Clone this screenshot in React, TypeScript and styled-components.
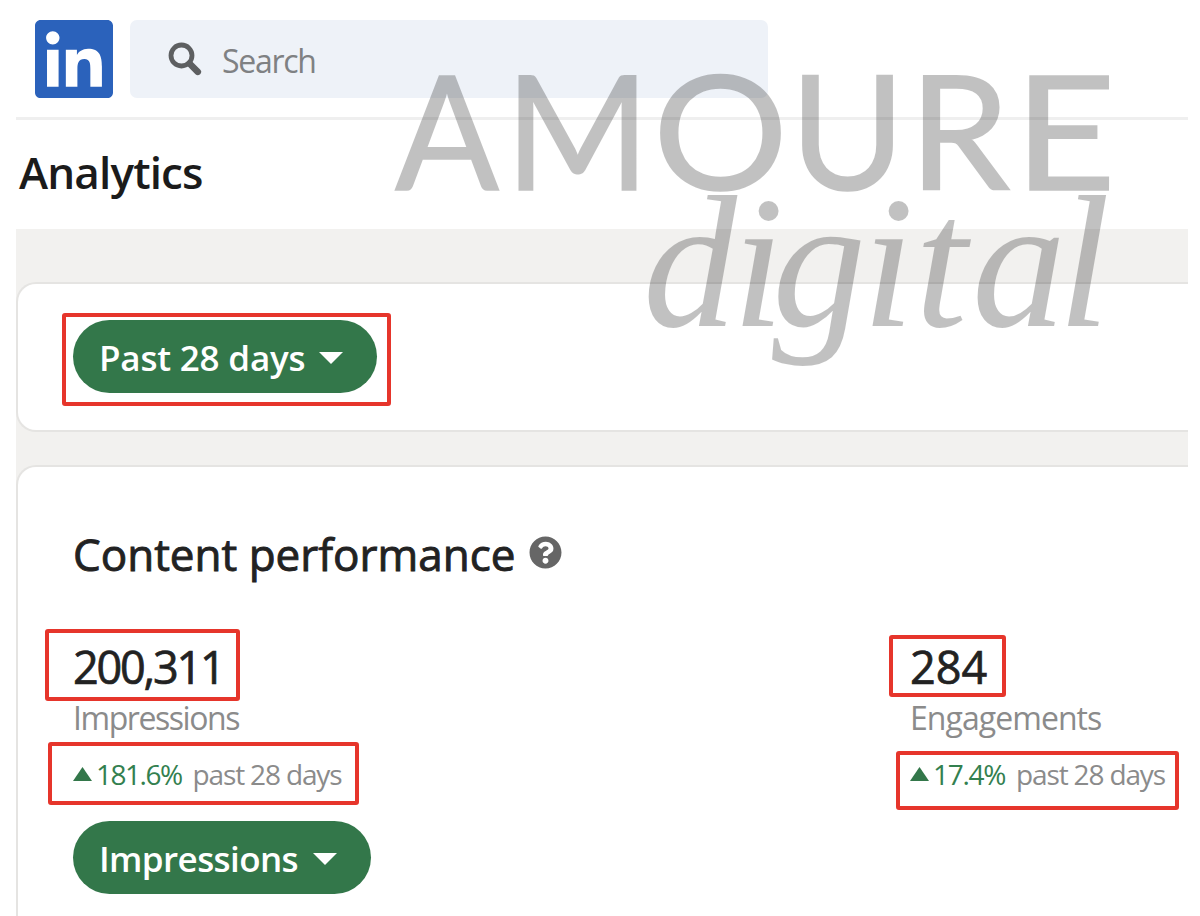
import React from "react";
import styled, { createGlobalStyle } from "styled-components";
import { FaLinkedin, FaQuestionCircle } from "react-icons/fa";

const STATS = [
  {
    value: "200,311",
    label: "Impressions",
    change: "181.6%",
    spacing: { value: -2.2, label: -1.45, change: -1.5 },
    valueBox: "-16px -16px -12px -28px",
    changeBox: "-13px -18px -12px -25px",
  },
  {
    value: "284",
    label: "Engagements",
    change: "17.4%",
    spacing: { value: 0, label: -0.95, change: -1.3 },
    valueBox: "-10px -19px -8px -21px",
    changeBox: "-4px -14px -17px -14px",
  },
];

// [letter, x, width]
const BRAND_TOP: [string, number, number][] = [
  ["A", 395, 104],
  ["M", 505, 145],
  ["O", 653, 135],
  ["U", 790, 115],
  ["R", 909, 101],
  ["E", 1014, 102],
];

const BRAND_BOTTOM: [string, number][] = [
  ["d", 643],
  ["i", 732],
  ["g", 772],
  ["i", 862],
  ["t", 915],
  ["a", 972],
  ["l", 1058],
];

const Caret = () => (
  <svg width="24" height="12" viewBox="0 0 24 12">
    <path d="M0 0H24L12 12Z" fill="#fff" />
  </svg>
);

const App = () => (
  <Page>
    <GlobalStyle />
    <Frame>
      <NavBar>
        <Logo />
        <SearchBox>
          <svg width="34" height="34" viewBox="0 0 34 34" fill="none" stroke="#5d5f61">
            <circle cx="13.5" cy="13.5" r="10.5" strokeWidth="4.8" />
            <path d="M21.5 21.5L29.8 29.8" strokeWidth="6.6" strokeLinecap="round" />
          </svg>
          <SearchLabel>Search</SearchLabel>
        </SearchBox>
      </NavBar>
      <TitleBar>
        <PageTitle>Analytics</PageTitle>
      </TitleBar>
      <Body>
        <FilterCard>
          <Highlight $inset="-7px -14px -13px -11px">
            <PillButton $width={304} $spacing={-0.2}>
              Past 28 days
              <Caret />
            </PillButton>
          </Highlight>
        </FilterCard>
        <PerformanceCard>
          <CardHeading>
            <HeadingText>Content performance</HeadingText>
            <FaQuestionCircle size={33} color="#666" />
          </CardHeading>
          <Stats>
            {STATS.map((stat) => (
              <Stat key={stat.label}>
                <Highlight $inset={stat.valueBox}>
                  <StatValue $spacing={stat.spacing.value}>{stat.value}</StatValue>
                </Highlight>
                <StatLabel $spacing={stat.spacing.label}>{stat.label}</StatLabel>
                <Highlight $inset={stat.changeBox}>
                  <Change>
                    <svg width="19" height="14" viewBox="0 0 19 14">
                      <path d="M0 14L9.5 0L19 14Z" fill="#33774a" />
                    </svg>
                    <Percent $spacing={stat.spacing.change}>{stat.change}</Percent>
                    <Period>past 28 days</Period>
                  </Change>
                </Highlight>
              </Stat>
            ))}
          </Stats>
          <PillButton $width={298} $spacing={-0.6}>
            Impressions
            <Caret />
          </PillButton>
        </PerformanceCard>
      </Body>
    </Frame>
    <Watermark viewBox="0 0 1200 400">
      <g fontFamily="Lato, sans-serif" fontSize="160" stroke="#000" strokeWidth="1.6">
        {BRAND_TOP.map(([letter, x, width]) => (
          <text key={letter} x={x} y="189.5" textLength={width} lengthAdjust="spacingAndGlyphs">
            {letter}
          </text>
        ))}
      </g>
      <text
        x={BRAND_BOTTOM.map(([, x]) => x).join(" ")}
        y="326"
        fontFamily="'Liberation Serif', serif"
        fontSize="188"
        fontStyle="italic"
      >
        {BRAND_BOTTOM.map(([letter]) => letter).join("")}
      </text>
    </Watermark>
  </Page>
);

export default App;

const GlobalStyle = createGlobalStyle`
  * {
    box-sizing: border-box;
  }
  body {
    margin: 0;
    background: #fff;
    overflow: hidden;
    font-family: "Open Sans", "Noto Sans", sans-serif;
  }
  svg {
    display: block;
    flex-shrink: 0;
  }
`;

const Page = styled.div`
  position: relative;
  width: 1200px;
  height: 916px;
  padding: 0 12px 0 16px;
  overflow: hidden;
`;

const Frame = styled.div`
  display: flex;
  flex-direction: column;
  height: 100%;
`;

const NavBar = styled.header`
  display: flex;
  gap: 17px;
  height: 120px;
  padding: 20px 0 0 19px;
  border-bottom: 3px solid #efefef;
`;

const Logo = styled(FaLinkedin).attrs({ viewBox: "0 32 448 448" })`
  width: 78px;
  height: 78px;
  color: #2b62bb;
`;

const SearchBox = styled.div`
  display: flex;
  align-items: center;
  gap: 20px;
  width: 638px;
  height: 78px;
  padding-left: 38px;
  border-radius: 7px;
  background: #eef2f8;
`;

const SearchLabel = styled.span`
  color: #7f8183;
  font-size: 32px;
  line-height: 40px;
  letter-spacing: -1.3px;
  padding-top: 4px;
`;

const TitleBar = styled.div`
  height: 109px;
  padding: 25px 0 0 3px;
`;

const PageTitle = styled.h1`
  margin: 0;
  color: #1b1b1b;
  font-size: 44px;
  font-weight: 600;
  line-height: 54px;
  letter-spacing: -0.85px;
`;

const Body = styled.main`
  display: flex;
  flex: 1;
  flex-direction: column;
  gap: 33px;
  padding-top: 53px;
  background: #f2f1ef;
`;

const Card = styled.section`
  border: 2px solid #e5e4e2;
  border-right: 0;
  background: #fff;
`;

const FilterCard = styled(Card)`
  height: 150px;
  padding: 36px 0 0 55px;
  border-radius: 20px 0 0 20px;
`;

const PerformanceCard = styled(Card)`
  flex: 1;
  padding: 60px 0 0 55px;
  border-bottom: 0;
  border-radius: 20px 0 0 0;
`;

const Highlight = styled.div<{ $inset: string }>`
  position: relative;
  width: fit-content;
  &::after {
    content: "";
    position: absolute;
    inset: ${(props) => props.$inset};
    border: 4.5px solid #e6352b;
    border-radius: 3px;
  }
`;

const PillButton = styled.button<{ $width: number; $spacing: number }>`
  display: flex;
  align-items: center;
  justify-content: space-between;
  width: ${(props) => props.$width}px;
  height: 73px;
  padding: 2px 34px 0 26px;
  border: 0;
  border-radius: 37px;
  background: #33774a;
  color: #fff;
  font: inherit;
  font-size: 35px;
  font-weight: 600;
  line-height: 44px;
  letter-spacing: ${(props) => props.$spacing}px;
`;

const CardHeading = styled.div`
  display: flex;
  gap: 14px;
  height: 54px;
  svg {
    margin-top: 9px;
  }
`;

const HeadingText = styled.h2`
  margin: 0;
  color: #222;
  font-size: 44px;
  font-weight: 400;
  line-height: 54px;
  letter-spacing: 0;
  -webkit-text-stroke: 0.9px #222;
`;

const Stats = styled.div`
  display: grid;
  grid-template-columns: 837px 1fr;
  margin-top: 64px;
  height: 176px;
`;

const Stat = styled.div`
  display: flex;
  flex-direction: column;
`;

const StatValue = styled.div<{ $spacing: number }>`
  color: #222;
  font-size: 45px;
  line-height: 44px;
  letter-spacing: ${(props) => props.$spacing}px;
  -webkit-text-stroke: 0.7px #222;
`;

const StatLabel = styled.div<{ $spacing: number }>`
  height: 66px;
  padding-top: 9px;
  color: #8b8b8b;
  font-size: 32px;
  line-height: 40px;
  letter-spacing: ${(props) => props.$spacing}px;
`;

const Change = styled.div`
  display: flex;
  align-items: center;
  height: 38px;
  color: #8b8b8b;
  font-size: 28px;
  line-height: 38px;
`;

const Percent = styled.span<{ $spacing: number }>`
  margin: 0 11px 0 4px;
  color: #33804f;
  letter-spacing: ${(props) => props.$spacing}px;
`;

const Period = styled.span`
  letter-spacing: -1.15px;
`;

const Watermark = styled.svg`
  position: absolute;
  top: 0;
  left: 0;
  width: 1200px;
  height: 400px;
  opacity: 0.24;
  pointer-events: none;
`;
